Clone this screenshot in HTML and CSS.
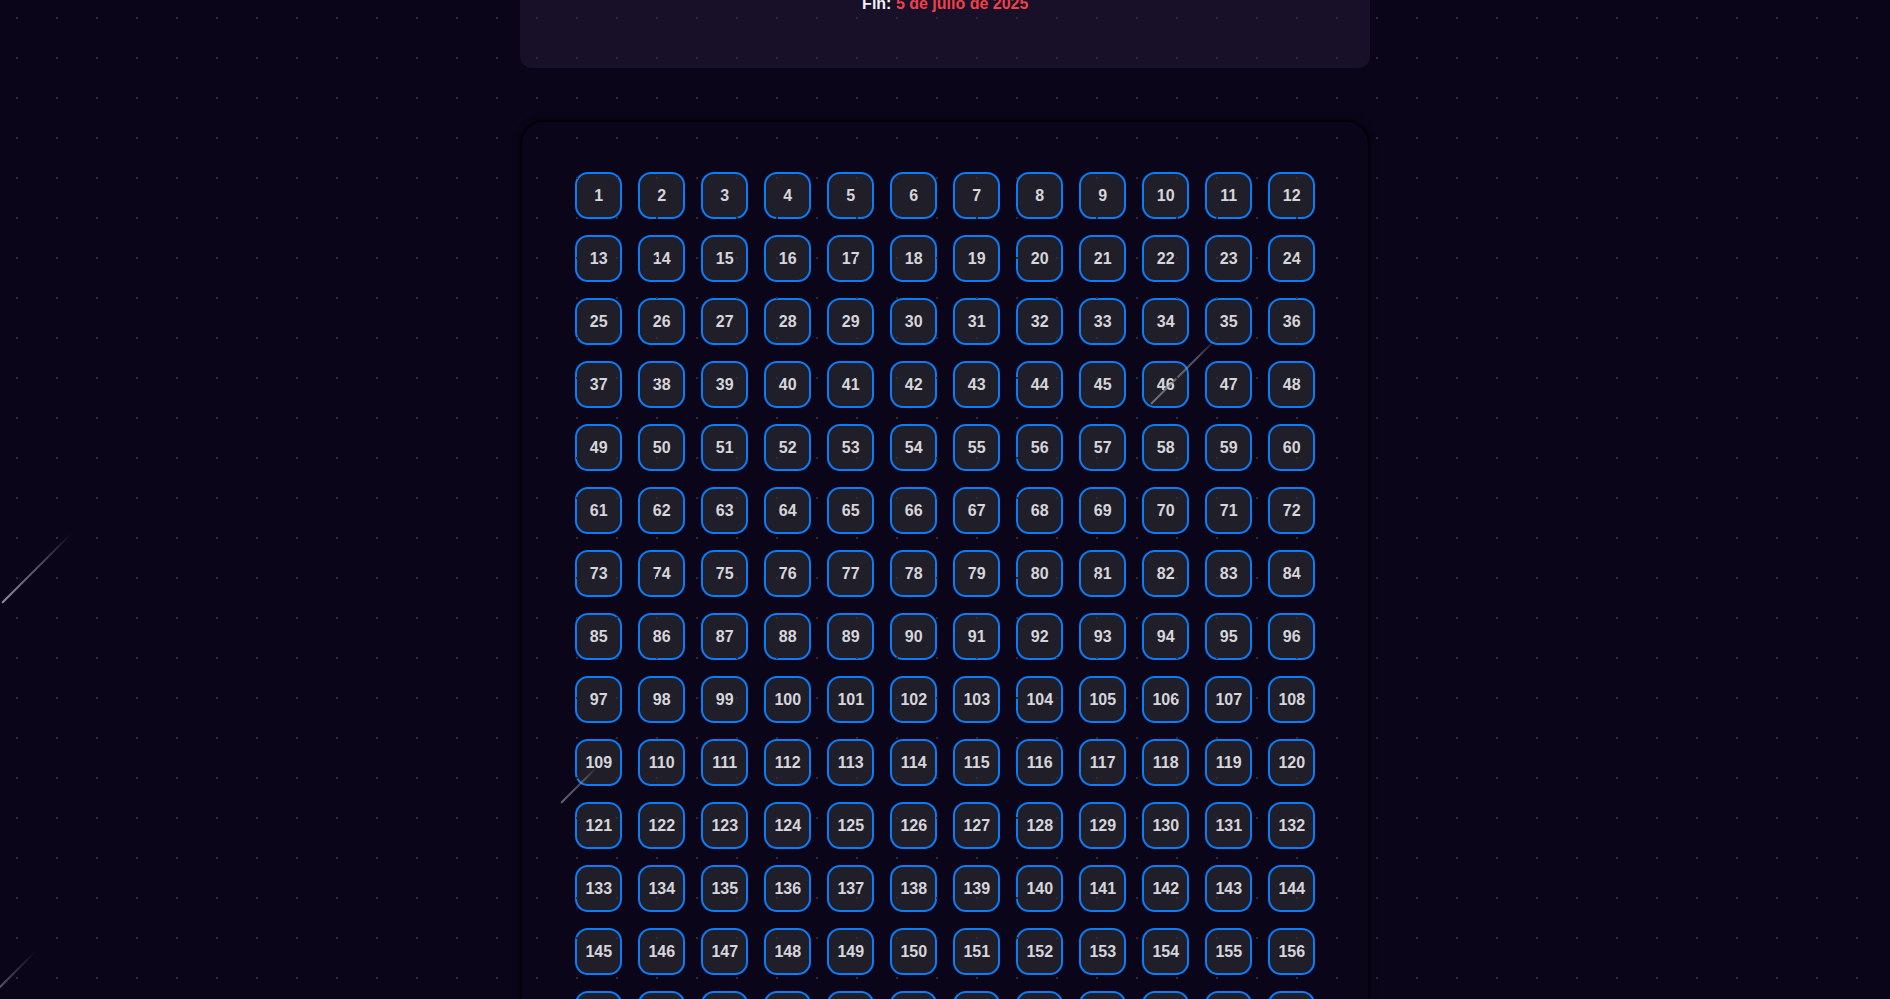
FILE: index.html
```html
<!DOCTYPE html>
<html lang="es">
<head>
<meta charset="utf-8">
<title>Rifa</title>
<link rel="stylesheet" href="styles.css">
</head>
<body>
<div class="dots" aria-hidden="true"></div>
<div class="star star-1" aria-hidden="true"></div>
<div class="star star-2" aria-hidden="true"></div>
<div class="star star-3" aria-hidden="true"></div>
<div class="star star-4" aria-hidden="true"></div>
<main class="page">
  <section class="info-card">
    <h2 class="info-title">Rifa</h2>
    <p class="info-line"><span class="label">Inicio:</span> <span class="date">1 de junio de 2025</span></p>
    <p class="info-line info-end"><span class="label">Fin:</span> <span class="date">5 de julio de 2025</span></p>
  </section>
  <section class="board">
    <div class="grid">
<button class="cell">1</button><button class="cell">2</button><button class="cell">3</button><button class="cell">4</button><button class="cell">5</button><button class="cell">6</button><button class="cell">7</button><button class="cell">8</button><button class="cell">9</button><button class="cell">10</button><button class="cell">11</button><button class="cell">12</button>
<button class="cell">13</button><button class="cell">14</button><button class="cell">15</button><button class="cell">16</button><button class="cell">17</button><button class="cell">18</button><button class="cell">19</button><button class="cell">20</button><button class="cell">21</button><button class="cell">22</button><button class="cell">23</button><button class="cell">24</button>
<button class="cell">25</button><button class="cell">26</button><button class="cell">27</button><button class="cell">28</button><button class="cell">29</button><button class="cell">30</button><button class="cell">31</button><button class="cell">32</button><button class="cell">33</button><button class="cell">34</button><button class="cell">35</button><button class="cell">36</button>
<button class="cell">37</button><button class="cell">38</button><button class="cell">39</button><button class="cell">40</button><button class="cell">41</button><button class="cell">42</button><button class="cell">43</button><button class="cell">44</button><button class="cell">45</button><button class="cell">46</button><button class="cell">47</button><button class="cell">48</button>
<button class="cell">49</button><button class="cell">50</button><button class="cell">51</button><button class="cell">52</button><button class="cell">53</button><button class="cell">54</button><button class="cell">55</button><button class="cell">56</button><button class="cell">57</button><button class="cell">58</button><button class="cell">59</button><button class="cell">60</button>
<button class="cell">61</button><button class="cell">62</button><button class="cell">63</button><button class="cell">64</button><button class="cell">65</button><button class="cell">66</button><button class="cell">67</button><button class="cell">68</button><button class="cell">69</button><button class="cell">70</button><button class="cell">71</button><button class="cell">72</button>
<button class="cell">73</button><button class="cell">74</button><button class="cell">75</button><button class="cell">76</button><button class="cell">77</button><button class="cell">78</button><button class="cell">79</button><button class="cell">80</button><button class="cell">81</button><button class="cell">82</button><button class="cell">83</button><button class="cell">84</button>
<button class="cell">85</button><button class="cell">86</button><button class="cell">87</button><button class="cell">88</button><button class="cell">89</button><button class="cell">90</button><button class="cell">91</button><button class="cell">92</button><button class="cell">93</button><button class="cell">94</button><button class="cell">95</button><button class="cell">96</button>
<button class="cell">97</button><button class="cell">98</button><button class="cell">99</button><button class="cell">100</button><button class="cell">101</button><button class="cell">102</button><button class="cell">103</button><button class="cell">104</button><button class="cell">105</button><button class="cell">106</button><button class="cell">107</button><button class="cell">108</button>
<button class="cell">109</button><button class="cell">110</button><button class="cell">111</button><button class="cell">112</button><button class="cell">113</button><button class="cell">114</button><button class="cell">115</button><button class="cell">116</button><button class="cell">117</button><button class="cell">118</button><button class="cell">119</button><button class="cell">120</button>
<button class="cell">121</button><button class="cell">122</button><button class="cell">123</button><button class="cell">124</button><button class="cell">125</button><button class="cell">126</button><button class="cell">127</button><button class="cell">128</button><button class="cell">129</button><button class="cell">130</button><button class="cell">131</button><button class="cell">132</button>
<button class="cell">133</button><button class="cell">134</button><button class="cell">135</button><button class="cell">136</button><button class="cell">137</button><button class="cell">138</button><button class="cell">139</button><button class="cell">140</button><button class="cell">141</button><button class="cell">142</button><button class="cell">143</button><button class="cell">144</button>
<button class="cell">145</button><button class="cell">146</button><button class="cell">147</button><button class="cell">148</button><button class="cell">149</button><button class="cell">150</button><button class="cell">151</button><button class="cell">152</button><button class="cell">153</button><button class="cell">154</button><button class="cell">155</button><button class="cell">156</button>
<button class="cell">157</button><button class="cell">158</button><button class="cell">159</button><button class="cell">160</button><button class="cell">161</button><button class="cell">162</button><button class="cell">163</button><button class="cell">164</button><button class="cell">165</button><button class="cell">166</button><button class="cell">167</button><button class="cell">168</button>
<button class="cell">169</button><button class="cell">170</button><button class="cell">171</button><button class="cell">172</button><button class="cell">173</button><button class="cell">174</button><button class="cell">175</button><button class="cell">176</button><button class="cell">177</button><button class="cell">178</button><button class="cell">179</button><button class="cell">180</button>
    </div>
  </section>
</main>
</body>
</html>
```
FILE: styles.css
```css
html, body {
  margin: 0;
  padding: 0;
}

body {
  background: #0a0519;
  color: #e5e5ea;
  font-family: "Liberation Sans", Arial, sans-serif;
  overflow: hidden;
}

.dots {
  position: fixed;
  inset: 0;
  pointer-events: none;
  z-index: 20;
  background-image: radial-gradient(circle, #2d2c36 0.9px, transparent 1.4px);
  background-size: 40px 40px;
  background-position: -3px -2px;
}

.star {
  position: absolute;
  height: 2px;
  transform-origin: 0 50%;
  transform: rotate(-45deg);
  background: linear-gradient(to right, rgba(190, 185, 205, 0.75), rgba(190, 185, 205, 0.35) 60%, rgba(190, 185, 205, 0));
  pointer-events: none;
  z-index: 15;
  border-radius: 1px;
}

.star-1 { left: 2px; top: 602px; width: 98px; }
.star-2 { left: 1151px; top: 403px; width: 94px; background: linear-gradient(to right, rgba(150, 145, 160, 0.7), rgba(150, 145, 160, 0.5) 70%, rgba(150, 145, 160, 0)); }
.star-3 { left: 561px; top: 802px; width: 50px; background: linear-gradient(to right, rgba(150, 145, 160, 0.65), rgba(150, 145, 160, 0.45) 70%, rgba(150, 145, 160, 0)); }
.star-4 { left: -4px; top: 990px; width: 56px; background: linear-gradient(to right, rgba(150, 145, 160, 0.6), rgba(150, 145, 160, 0)); }

.page {
  width: 850px;
  margin: 0 auto;
  padding-left: 0.5px;
}

.info-card {
  margin-top: -104px;
  background: #181029;
  border-radius: 12px;
  padding: 24px 24px 0;
  text-align: center;
}

.info-title {
  margin: 0 0 12px;
  font-size: 24px;
  line-height: 32px;
  color: #ffffff;
}

.info-line {
  margin: 0 0 4px;
  font-size: 16px;
  line-height: 24px;
  font-weight: 700;
}

.info-end {
  margin: 0;
  padding-bottom: 52px;
}

.label {
  color: #f2f2f5;
}

.date {
  color: #ef4147;
}

.board {
  margin-top: 52px;
  border: 2px solid #020108;
  border-radius: 24px;
  background: transparent;
  padding: 50px 0 60px;
  box-shadow: 0 0 6px rgba(0, 0, 0, 0.6);
}

.grid {
  display: grid;
  grid-template-columns: repeat(12, 47px);
  gap: 16px;
  justify-content: center;
}

.cell {
  box-sizing: border-box;
  width: 47px;
  height: 47px;
  padding: 0;
  border: 2.5px solid #0a7dfa;
  border-radius: 13px;
  background: #201e29;
  color: #d6d5db;
  font-family: "Liberation Sans", Arial, sans-serif;
  font-size: 16px;
  font-weight: 700;
  display: flex;
  align-items: center;
  justify-content: center;
  cursor: pointer;
}
```
